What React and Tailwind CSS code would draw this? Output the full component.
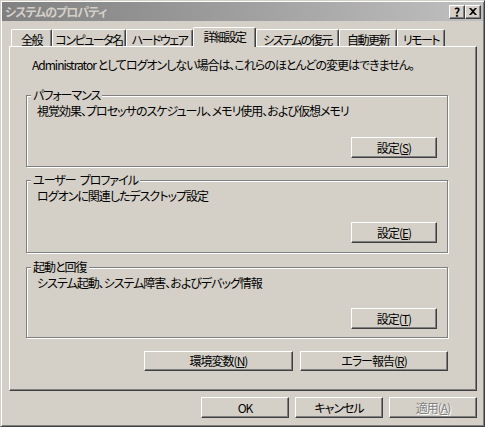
import React from 'react';

const Mn = ({ children }) => <span className="underline underline-offset-[1px]">{children}</span>;

function Btn({ children, className = '', disabled = false }) {
  return (
    <button
      type="button"
      className={`flex items-center justify-center bg-[#d4d0c8] border border-t-white border-l-white border-r-[#404040] border-b-[#404040] shadow-[inset_-1px_-1px_#808080] text-[12px] leading-[14px] ${
        disabled ? 'text-[#808080] [text-shadow:1px_1px_#fff]' : 'text-black'
      } ${className}`}
    >
      {children}
    </button>
  );
}

function Group({ title, text, button, className = '', buttonGap = 'mt-[19px]' }) {
  return (
    <div
      className={`relative w-[422px] border border-[#808080] shadow-[1px_1px_#fff,inset_1px_1px_#fff] flex flex-col pt-[8px] pl-[10px] ${className}`}
    >
      <span className="absolute left-[4px] -top-[8px] px-[2px] bg-[#d4d0c8] leading-[14px]">{title}</span>
      <p className="leading-[14px]">{text}</p>
      <Btn className={`self-end mr-[10px] w-[86px] h-[21px] ${buttonGap}`}>{button}</Btn>
    </div>
  );
}

const tabs = [
  { label: '全般', w: 'w-[41px]' },
  { label: 'コンピュータ名', w: 'w-[74px]' },
  { label: 'ハードウェア', w: 'w-[67px]' },
  { label: '詳細設定', w: 'w-[63px]', active: true },
  { label: 'システムの復元', w: 'w-[83px]' },
  { label: '自動更新', w: 'w-[58px]' },
  { label: 'リモート', w: 'w-[48px]' },
];

export default function App() {
  return (
    <div className="w-[485px] h-[427px] bg-[#d4d0c8] border border-t-[#d4d0c8] border-l-[#d4d0c8] border-r-[#404040] border-b-[#404040] shadow-[inset_1px_1px_#fff,inset_-1px_-1px_#808080] flex flex-col text-[12px] tracking-[-1px] text-black font-['Noto_Sans_CJK_JP','Noto_Sans',sans-serif] [font-feature-settings:'palt']">
      {/* title bar */}
      <div className="mx-[1px] mt-[1px] h-[19px] bg-gradient-to-r from-[#808080] to-[#c0c0c0] flex items-center pl-[3px] pr-[2px]">
        <span className="font-bold text-[#d4d0c8] leading-[14px] flex-1">システムのプロパティ</span>
        <div className="flex tracking-normal">
          <Btn className="w-[16px] h-[14px] font-bold text-[11px]">?</Btn>
          <Btn className="w-[16px] h-[14px]">
            <svg width="8" height="7" viewBox="0 0 8 7">
              <path d="M0 0h2l2 2 2-2h2L5 3.5 8 7H6L4 5 2 7H0l3-3.5z" fill="#000" />
            </svg>
          </Btn>
        </div>
      </div>

      <div className="px-[8px] mt-[6px]">
        {/* tabs */}
        <div className="flex items-end h-[19px] pl-[2px] tracking-[-1.5px]">
          {tabs.map((t) => (
            <div
              key={t.label}
              className={`${t.w} flex justify-center border-t border-l border-t-white border-l-white border-r border-r-[#404040] shadow-[inset_-1px_0_#808080] rounded-t-[2px] bg-[#d4d0c8] whitespace-nowrap leading-[14px] ${
                t.active ? 'h-[20px] -mb-[1px] relative z-10 pt-[2px]' : 'h-[17px] pt-[3px]'
              }`}
            >
              {t.label}
            </div>
          ))}
        </div>

        {/* tab page */}
        <div className="w-[468px] h-[345px] border border-t-white border-l-white border-r-[#404040] border-b-[#404040] shadow-[inset_-1px_-1px_#808080] pt-[11px] pl-[16px] flex flex-col">
          <p className="ml-[6px] leading-[14px]">
            Administrator としてログオンしない場合は、これらのほとんどの変更はできません。
          </p>
          <Group
            className="mt-[23px] h-[72px]"
            title="パフォーマンス"
            text="視覚効果、プロセッサのスケジュール、メモリ使用、および仮想メモリ"
            button={<>設定(<Mn>S</Mn>)</>}
          />
          <Group
            className="mt-[13px] h-[73px]"
            title={<>ユーザー<span className="ml-[4px]">プロファイル</span></>}
            text="ログオンに関連したデスクトップ設定"
            button={<>設定(<Mn>E</Mn>)</>}
          />
          <Group
            className="mt-[14px] h-[71px]"
            buttonGap="mt-[18px]"
            title="起動と回復"
            text="システム起動、システム障害、およびデバッグ情報"
            button={<>設定(<Mn>T</Mn>)</>}
          />
          <div className="mt-[13px] ml-[118px] flex gap-[7px]">
            <Btn className="w-[149px] h-[20px]">環境変数(<Mn>N</Mn>)</Btn>
            <Btn className="w-[148px] h-[20px]">エラー報告(<Mn>R</Mn>)</Btn>
          </div>
        </div>
      </div>

      {/* dialog buttons */}
      <div className="mt-[6px] mr-[7px] flex justify-end gap-[6px]">
        <Btn className="w-[88px] h-[21px]">OK</Btn>
        <Btn className="w-[88px] h-[21px]">キャンセル</Btn>
        <Btn className="w-[88px] h-[21px]" disabled>
          適用(<Mn>A</Mn>)
        </Btn>
      </div>
    </div>
  );
}
